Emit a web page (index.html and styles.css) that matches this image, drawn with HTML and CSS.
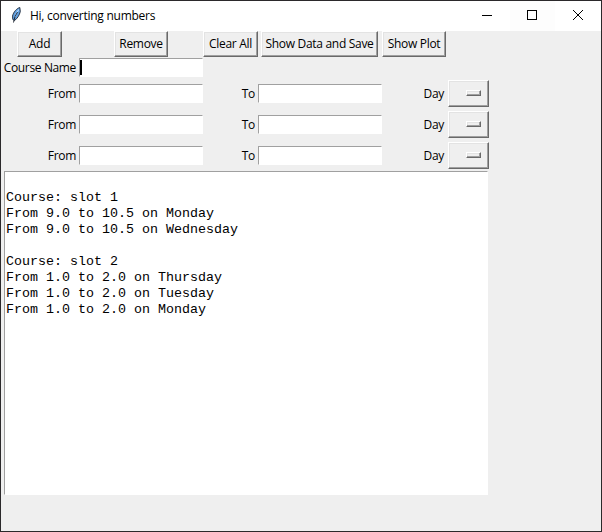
FILE: index.html
```html
<!DOCTYPE html>
<html lang="en">
<head>
<meta charset="utf-8">
<title>Hi, converting numbers</title>
<link rel="stylesheet" href="styles.css">
</head>
<body>
<div class="window">
  <header class="titlebar">
    <svg class="feather" width="11" height="16" viewBox="0 0 11 16">
      <path d="M8.8.5C6 1.2 2.3 5 1.5 9.2L1.8 12.5 3.5 13.5C6.5 11.5 8.5 8 9.3 4.5Z" fill="#5f9fe0" stroke="#1c2634" stroke-width=".9"/>
      <path d="M7.8 2.5Q5 6 4.2 10" fill="none" stroke="#b9dcff" stroke-width="1.2"/>
      <path d="M6.5 5Q3.5 9 2.5 15.5" fill="none" stroke="#141c28" stroke-width=".9"/>
    </svg>
    <h1 class="title"><span class="title-text">Hi, converting numbers</span></h1>
    <div class="controls">
      <svg width="46" height="30" viewBox="0 0 46 30"><path d="M18 14.5H28" stroke="#000"/></svg>
      <svg class="maximize" width="45" height="30" viewBox="0 0 45 30"><rect x="17.5" y="9.5" width="9" height="9" fill="none" stroke="#000"/></svg>
      <svg width="46" height="30" viewBox="0 0 46 30"><path d="M18 9L28 19M28 9L18 19" stroke="#000"/></svg>
    </div>
  </header>
  <main class="form">
    <button class="button add">Add</button>
    <button class="button remove">Remove</button>
    <button class="button clear">Clear All</button>
    <button class="button save">Show Data and Save</button>
    <button class="button plot">Show Plot</button>

    <label class="label first course">Course Name</label>
    <div class="entry top"><span class="caret"></span></div>

    <label class="label first">From</label><div class="entry"></div>
    <label class="label">To</label><div class="entry"></div>
    <label class="label day">Day</label><button class="menu"><span class="indicator"></span></button>

    <label class="label first">From</label><div class="entry"></div>
    <label class="label">To</label><div class="entry"></div>
    <label class="label day">Day</label><button class="menu"><span class="indicator"></span></button>

    <label class="label first">From</label><div class="entry"></div>
    <label class="label">To</label><div class="entry"></div>
    <label class="label day">Day</label><button class="menu"><span class="indicator"></span></button>

    <pre class="output">

Course: slot 1
From 9.0 to 10.5 on Monday
From 9.0 to 10.5 on Wednesday

Course: slot 2
From 1.0 to 2.0 on Thursday
From 1.0 to 2.0 on Tuesday
From 1.0 to 2.0 on Monday</pre>
  </main>
</div>
</body>
</html>
```
FILE: styles.css
```css
* { box-sizing: border-box; }

body {
  margin: 0;
  font: 12px/16px "Open Sans", "Noto Sans", sans-serif;
  color: #000;
}

.window {
  width: 602px;
  height: 532px;
  border: 1px solid #2b292b;
  background: #efefef;
  overflow: hidden;
}

.titlebar {
  display: flex;
  height: 30px;
  background: #fff;
}

.feather { margin: 6px 8px 0 10px; }

.title {
  flex: 1;
  margin: 0;
  font: inherit;
  line-height: 29px;
  white-space: nowrap;
}

.title-text { letter-spacing: -0.26px; }

.controls {
  display: flex;
  width: 137px;
}

.maximize { background: #fdfdfd; }

.form {
  display: grid;
  grid-template-columns: 78px 124px 55px 124px 66px 42px;
  grid-template-rows: 27px 20px 31px 31px 31px 324px;
  align-items: center;
}

.button,
.menu {
  padding: 0;
  font: inherit;
  color: inherit;
  background: #efefef;
  border: 1px solid;
  border-color: #fff #696969 #696969 #fff;
  box-shadow: inset -1px -1px #a0a0a0, inset 1px 1px #e3e3e3;
  border-radius: 0;
  white-space: nowrap;
}

.button {
  height: 26px;
  align-self: start;
  justify-self: center;
  letter-spacing: -0.3px;
}

.add { width: 45px; margin-right: 1px; }
.remove { width: 54px; }
.clear { width: 55px; justify-self: start; }
.save { width: 117px; margin-right: 1px; }
.plot { width: 64px; justify-self: start; }

.label {
  justify-self: end;
  padding-right: 3px;
  letter-spacing: -0.3px;
  white-space: nowrap;
}

.course { letter-spacing: -0.36px; }
.day { padding-right: 4px; }

.first { grid-column: 1; }

.entry {
  width: 124px;
  height: 19px;
  background: #fff;
  border: 1px solid;
  border-color: #a0a0a0 #fff #fff #a0a0a0;
}

.top { align-self: start; }

.caret {
  display: block;
  width: 2px;
  height: 15px;
  margin: 1px 0 0;
  background: #000;
}

.menu {
  display: flex;
  justify-content: flex-end;
  align-items: center;
  width: 41px;
  height: 27px;
  padding-right: 7px;
  justify-self: start;
}

.indicator {
  width: 15px;
  height: 6px;
  margin-top: -1px;
  border: 1px solid;
  border-color: #fff #696969 #696969 #fff;
  box-shadow: inset -1px -1px #a0a0a0, inset 1px 1px #e3e3e3;
}

.output {
  grid-column: 1 / -1;
  width: 484px;
  height: 324px;
  margin: 0 0 0 3px;
  padding: 2px 1px 1px;
  border: 1px solid;
  border-color: #a0a0a0 #fff #fff #a0a0a0;
  background: #fff;
  font: 13.333px/16px "Liberation Mono", monospace;
}
```
